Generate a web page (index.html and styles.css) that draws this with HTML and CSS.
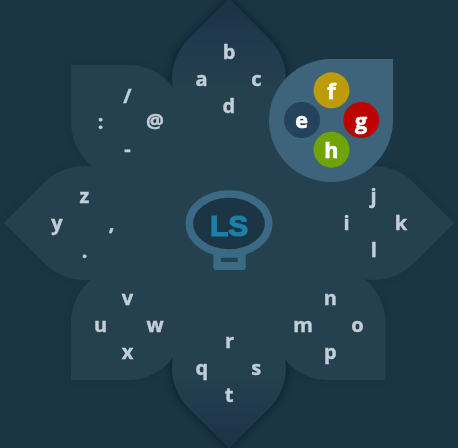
FILE: index.html
```
<!DOCTYPE html>
<html lang="en">
<head>
<meta charset="utf-8">
<title>Daisy keyboard</title>
<link rel="stylesheet" href="styles.css">
</head>
<body>
<svg class="daisy" viewBox="0 0 458 448" width="458" height="448">
  <defs>
    <linearGradient id="petal-fill" gradientUnits="userSpaceOnUse" x1="0" y1="0" x2="0" y2="448">
      <stop class="point" offset="0"/>
      <stop class="tip" offset="0.08"/>
      <stop class="body" offset="0.2"/>
      <stop class="body" offset="0.84"/>
      <stop class="tip" offset="0.93"/>
      <stop class="point" offset="1"/>
    </linearGradient>
    <!-- teardrop petal, square corner pointing to the top left -->
    <path id="petal" d="M-57-57H0A57 57 0 1 1-57 0Z"/>
  </defs>

  <g class="shadow">
    <use href="#petal" x="128" y="122"/>
    <use href="#petal" transform="translate(84.5 223) rotate(-45)"/>
    <use href="#petal" transform="translate(128 323) rotate(-90)"/>
    <use href="#petal" transform="translate(328.500 323) rotate(180)"/>
    <use href="#petal" transform="translate(373.500 223) rotate(135)"/>
  </g>
  <g class="shadow deep">
    <use href="#petal" transform="translate(229 79) rotate(45)"/>
    <use href="#petal" transform="translate(229 368) rotate(-135)"/>
  </g>

  <g class="petals">
    <rect x="115" y="110" width="228" height="225"/>
    <use href="#petal" x="128" y="122"/>
    <use href="#petal" transform="translate(84.5 223) rotate(-45)"/>
    <use href="#petal" transform="translate(128 323) rotate(-90)"/>
    <use href="#petal" transform="translate(328.500 323) rotate(180)"/>
    <use href="#petal" transform="translate(373.500 223) rotate(135)"/>
  </g>
  <path fill="url(#petal-fill)" d="M229-1.600L269.300 38.700A57 57 0 1 1 188.700 38.700ZM229 448.600L188.700 408.300A57 57 0 1 1 269.300 408.300Z"/>

  <path class="active" d="M331 59H393V120.500A62 61.500 0 1 1 331 59Z"/>
  <circle class="yellow" cx="331.500" cy="90.300" r="18"/>
  <circle class="navy" cx="302" cy="120" r="18"/>
  <circle class="red" cx="361.300" cy="120" r="18"/>
  <circle class="green" cx="331.500" cy="149.700" r="18"/>

  <g class="keys">
    <text x="229" y="58.500">b</text><text x="201.500" y="86">a</text><text x="256.500" y="86">c</text><text x="228.800" y="112.800">d</text>
    <text x="127.500" y="102.500">/</text><text x="100.500" y="129">:</text><text x="155" y="128">@</text><text x="127.500" y="155.800">-</text>
    <text x="84.500" y="203">z</text><text x="57" y="230.300">y</text><text x="111.500" y="230">,</text><text x="84.500" y="257.500">.</text>
    <text x="127.500" y="304.500">v</text><text x="100.500" y="331.700">u</text><text x="155" y="331.700">w</text><text x="127.500" y="359">x</text>
    <text x="229.500" y="347.700">r</text><text x="201.800" y="375">q</text><text x="256.300" y="375">s</text><text x="229" y="402">t</text>
    <text x="330.300" y="304.500">n</text><text x="303" y="331.700">m</text><text x="357.500" y="331.700">o</text><text x="330.300" y="359">p</text>
    <text x="373.500" y="203.300">j</text><text x="346.500" y="230.300">i</text><text x="401" y="230.300">k</text><text x="373.700" y="257.300">l</text>
  </g>
  <g class="keys selected">
    <text x="331.500" y="98.800">f</text><text x="301.700" y="128">e</text><text x="361" y="129">g</text><text x="331.200" y="157.900">h</text>
  </g>

  <path class="stand" fill-rule="evenodd" d="M213.300 250H245.700V267Q245.700 270 242.700 270H216.300Q213.300 270 213.300 267ZM221 257.700V262H237.700V257.700Z"/>
  <ellipse class="lens" cx="229" cy="223.500" rx="39.700" ry="29.500"/>
  <text class="logo" x="229.200" y="235.500">LS</text>
</svg>
</body>
</html>
```
FILE: styles.css
```
body {
  margin: 0;
  background: #1b3543;
}
.daisy {
  display: block;
  overflow: hidden;
}
.point { stop-color: #1c3244; }
.tip { stop-color: #20384d; }
.body { stop-color: #25404e; }
.petals { fill: #25404e; }
.shadow {
  fill: #18303e;
  filter: blur(3px);
  opacity: 0.6;
}
.deep {
  fill: #0b222e;
  stroke: #0b222e;
  stroke-width: 5px;
  opacity: 0.75;
}
.active { fill: #3e647b; }
.yellow { fill: #bd9b0b; }
.navy {
  fill: #24425c;
  filter: blur(0.7px);
}
.red { fill: #bd0202; }
.green { fill: #6fa307; }
.keys {
  font: 700 20px "Open Sans", "Noto Sans", sans-serif;
  fill: #c3ced8;
  stroke: #c3ced8;
  stroke-width: 0.4px;
  text-anchor: middle;
}
.selected {
  font-size: 21.5px;
  fill: #fff;
  stroke: #fff;
  stroke-width: 0.6px;
}
.stand { fill: #3b6b84; }
.lens {
  fill: #1c3544;
  stroke: #3b6b84;
  stroke-width: 7.6px;
}
.logo {
  font: 700 30px "Liberation Sans", Arial, sans-serif;
  fill: #1b81a8;
  stroke: #1b81a8;
  stroke-width: 1.2px;
  text-anchor: middle;
}
```
